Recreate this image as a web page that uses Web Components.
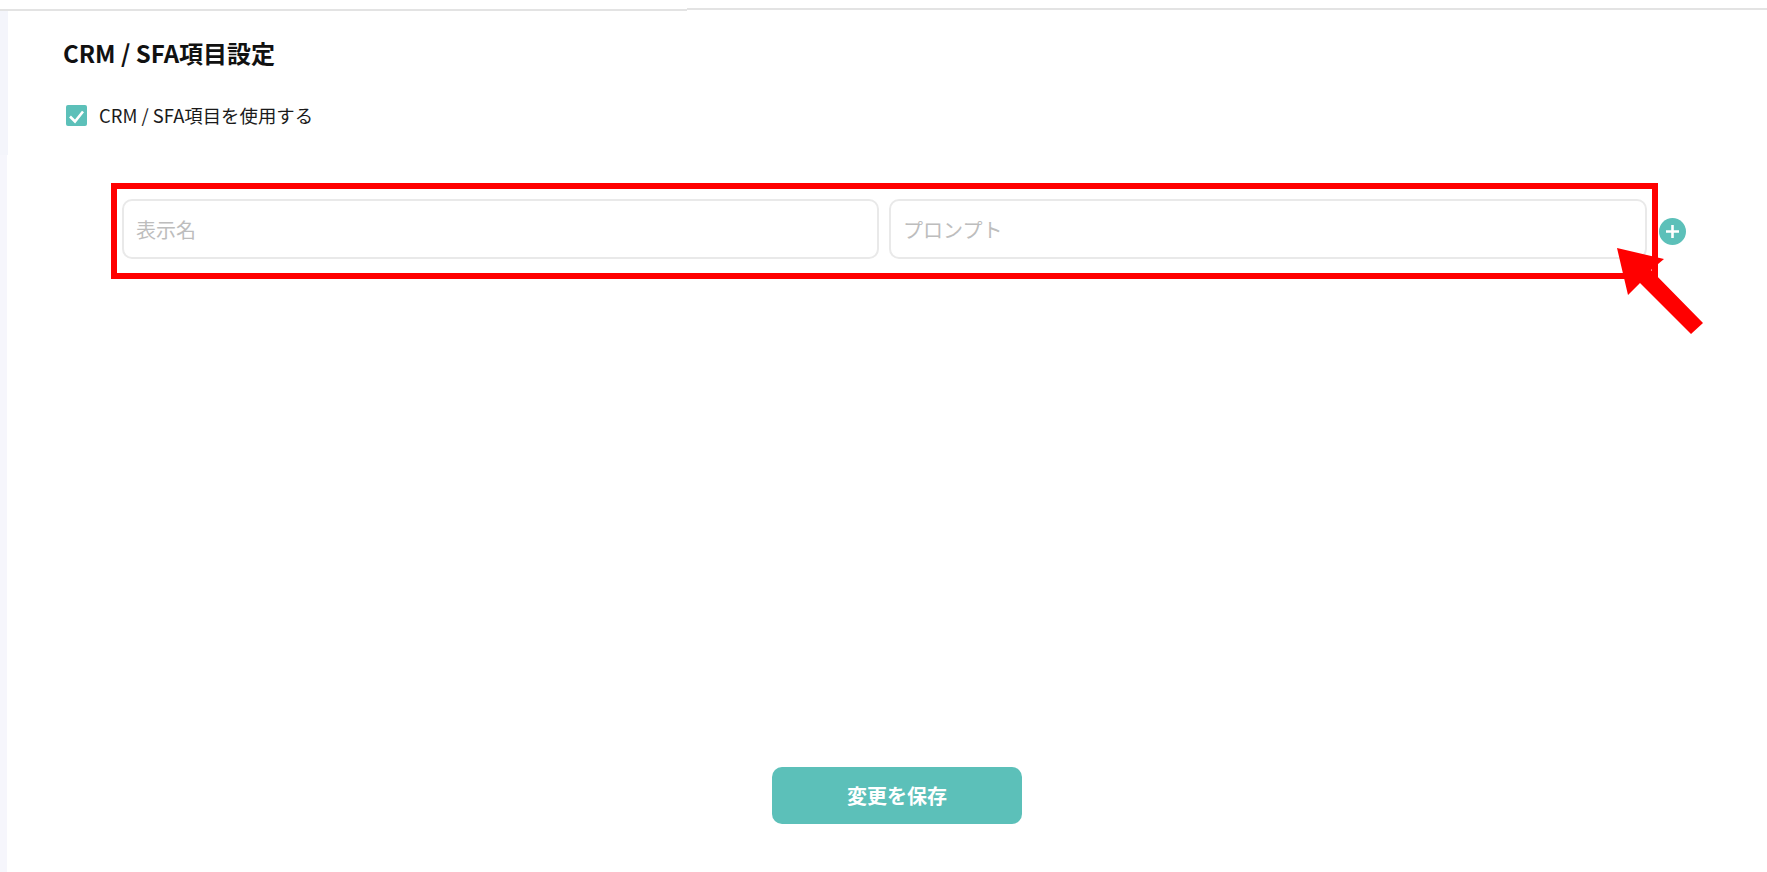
<!DOCTYPE html>
<html lang="ja">
<head>
<meta charset="utf-8">
<title>CRM / SFA項目設定</title>
<style>
html, body { margin: 0; height: 100%; background: #fff; overflow: hidden; }
body { font-family: "Noto Sans CJK JP", "Noto Sans", sans-serif; color: #111; }
</style>
</head>
<body>
<settings-page>
    <check-row slot="check">CRM / SFA項目を使用する</check-row>
    <field-row slot="fields">
        <text-field>表示名</text-field>
        <text-field>プロンプト</text-field>
    </field-row>
    <save-button slot="save">変更を保存</save-button>
</settings-page>

<script>
class SettingsPage extends HTMLElement {
    constructor() {
        super();
        this.attachShadow({ mode: 'open' });
    }

    connectedCallback() {
        this.shadowRoot.innerHTML = `
            <style>
                :host {
                    display: flex;
                    flex-direction: column;
                    height: 872px;
                    position: relative;
                    overflow: hidden;
                }
                .topbar {
                    display: flex;
                    flex: none;
                    height: 11px;
                }
                .topbar div {
                    background: #e3e3e3;
                    height: 2px;
                }
                .topbar .left { width: 687px; margin-top: 9px; }
                .topbar .right { flex: 1; margin-top: 8px; }
                .body {
                    display: flex;
                    flex: 1;
                    min-height: 0;
                }
                .rail {
                    display: flex;
                    flex-direction: column;
                    flex: none;
                    width: 8px;
                }
                .rail .a { height: 144px; width: 8px; background: #f4f5fb; }
                .rail .b { flex: 1; width: 7px; background: #f6f6fc; }
                main {
                    display: flex;
                    flex-direction: column;
                    flex: 1;
                    min-width: 0;
                    padding: 24px 0 48px 55px;
                }
                h2 {
                    margin: 0;
                    font-size: 24px;
                    line-height: 36px;
                    font-weight: 700;
                    color: #111;
                }
                .check { margin: 31px 0 0 3px; }
                .fields { margin: 55px 0 0 48px; }
                .save { margin-top: auto; align-self: flex-start; margin-left: 709px; }
                svg.arrow {
                    position: absolute;
                    left: 1610px;
                    top: 240px;
                }
            </style>
            <div class="topbar"><div class="left"></div><div class="right"></div></div>
            <div class="body">
                <div class="rail"><div class="a"></div><div class="b"></div></div>
                <main>
                    <h2>CRM / SFA項目設定</h2>
                    <div class="check"><slot name="check"></slot></div>
                    <div class="fields"><slot name="fields"></slot></div>
                    <div class="save"><slot name="save"></slot></div>
                </main>
            </div>
            <svg class="arrow" width="100" height="100" viewBox="1610 240 100 100">
                <polygon fill="#ff0000" points="1617,248 1664,259 1651,270 1703,323 1691,334 1640,283 1628,295"/>
            </svg>
        `;
    }
}

class CheckRow extends HTMLElement {
    constructor() {
        super();
        this.attachShadow({ mode: 'open' });
    }

    connectedCallback() {
        this.shadowRoot.innerHTML = `
            <style>
                :host {
                    display: flex;
                    align-items: center;
                    gap: 12px;
                    font-size: 18.4px;
                    line-height: 26px;
                    color: #1a1a1a;
                }
                .box {
                    width: 21px;
                    height: 21px;
                    flex: none;
                    border-radius: 2px;
                    background: #5cc0b9;
                }
                svg { display: block; }
            </style>
            <span class="box">
                <svg width="21" height="21" viewBox="0 0 21 21">
                    <path d="M4 11.5 L9 16.5 L17 6.5" fill="none" stroke="#fff" stroke-width="2.6"/>
                </svg>
            </span>
            <slot></slot>
        `;
    }
}

class FieldRow extends HTMLElement {
    constructor() {
        super();
        this.attachShadow({ mode: 'open' });
    }

    connectedCallback() {
        this.shadowRoot.innerHTML = `
            <style>
                :host {
                    display: flex;
                    align-items: center;
                }
                .frame {
                    display: flex;
                    gap: 10px;
                    box-sizing: border-box;
                    width: 1547px;
                    height: 96px;
                    padding: 10px 5px 14px 5px;
                    border: 6px solid #ff0000;
                }
                ::slotted(:first-child) { flex: 0 0 757px; }
                button {
                    flex: none;
                    width: 27px;
                    height: 27px;
                    margin-left: 1px;
                    padding: 0;
                    border: 0;
                    border-radius: 50%;
                    background: #5cc0b9;
                }
                svg { display: block; }
            </style>
            <div class="frame"><slot></slot></div>
            <button aria-label="追加">
                <svg width="27" height="27" viewBox="0 0 27 27">
                    <path d="M13.5 7 V20 M7 13.5 H20" fill="none" stroke="#fff" stroke-width="2.6"/>
                </svg>
            </button>
        `;
    }
}

class TextField extends HTMLElement {
    constructor() {
        super();
        this.attachShadow({ mode: 'open' });
    }

    connectedCallback() {
        this.shadowRoot.innerHTML = `
            <style>
                :host {
                    display: flex;
                    align-items: center;
                    flex: 1;
                    box-sizing: border-box;
                    height: 60px;
                    padding: 0 12px;
                    border: 2px solid #e9e9e9;
                    border-radius: 10px;
                    font-size: 20px;
                    color: #bdbdbd;
                    background: #fff;
                }
            </style>
            <slot></slot>
        `;
    }
}

class SaveButton extends HTMLElement {
    constructor() {
        super();
        this.attachShadow({ mode: 'open' });
    }

    connectedCallback() {
        this.shadowRoot.innerHTML = `
            <style>
                :host {
                    display: flex;
                    align-items: center;
                    justify-content: center;
                    width: 250px;
                    height: 57px;
                    border-radius: 10px;
                    background: #5cc0b9;
                    color: #fff;
                    font-size: 20px;
                    font-weight: 700;
                }
            </style>
            <slot></slot>
        `;
    }
}

customElements.define('settings-page', SettingsPage);
customElements.define('check-row', CheckRow);
customElements.define('field-row', FieldRow);
customElements.define('text-field', TextField);
customElements.define('save-button', SaveButton);
</script>
</body>
</html>
